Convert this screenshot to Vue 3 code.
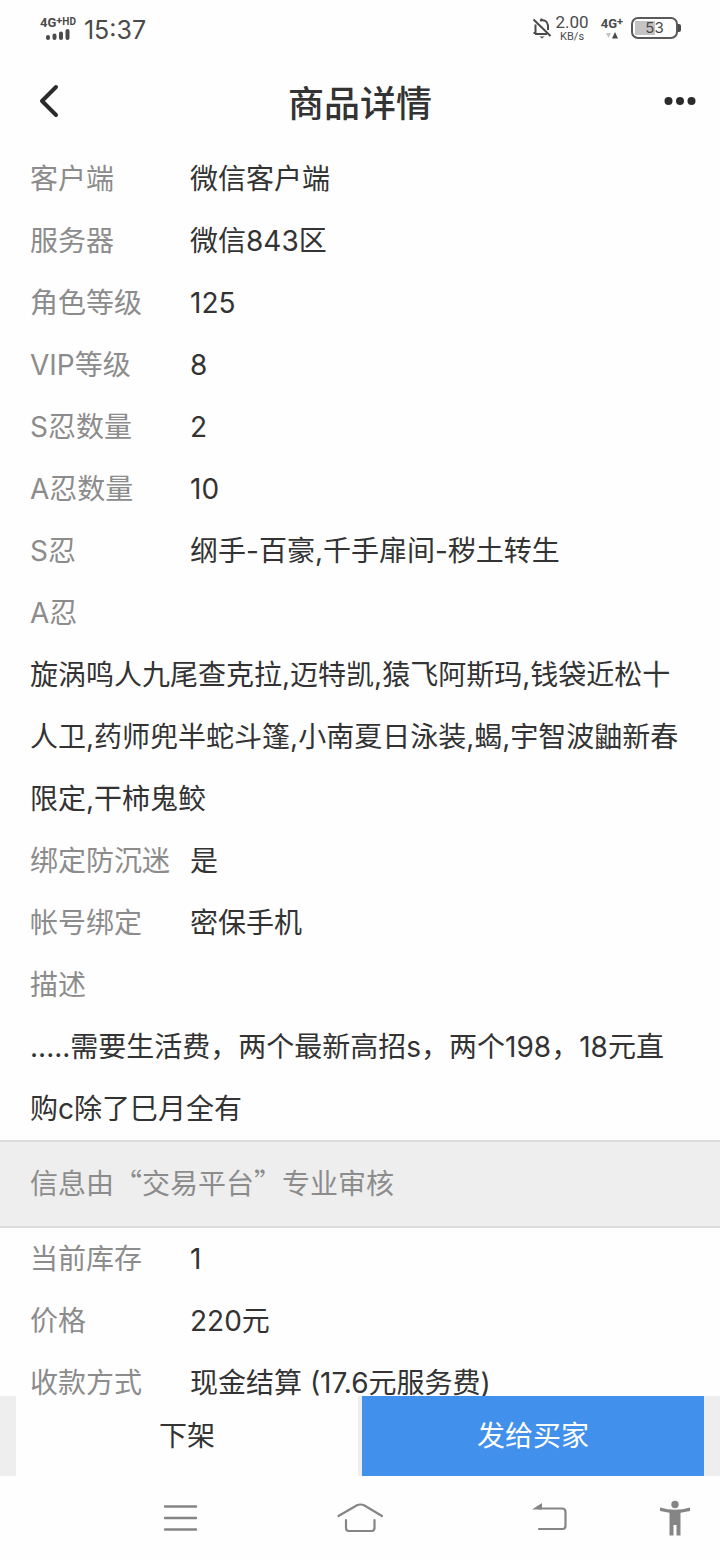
<script setup>
const details = [
  { label: '客户端', value: '微信客户端' },
  { label: '服务器', value: '微信843区' },
  { label: '角色等级', value: '125' },
  { label: 'VIP等级', value: '8' },
  { label: 'S忍数量', value: '2' },
  { label: 'A忍数量', value: '10' },
  { label: 'S忍', value: '纲手-百豪,千手扉间-秽土转生' },
  {
    label: 'A忍',
    value: '旋涡鸣人九尾查克拉,迈特凯,猿飞阿斯玛,钱袋近松十人卫,药师兜半蛇斗篷,小南夏日泳装,蝎,宇智波鼬新春限定,干柿鬼鲛',
    block: true
  },
  { label: '绑定防沉迷', value: '是' },
  { label: '帐号绑定', value: '密保手机' },
  {
    label: '描述',
    value: '.....需要生活费，两个最新高招s，两个198，18元直购c除了巳月全有',
    block: true
  }
]

const sale = [
  { label: '当前库存', value: '1' },
  { label: '价格', value: '220元' },
  { label: '收款方式', value: '现金结算 (17.6元服务费)' }
]
</script>

<template>
  <div class="page">
    <div class="status">
      <div class="signal">
        <span class="net">4G<span class="net-sup">+</span><span class="net-hd">HD</span></span>
        <svg width="24" height="11" viewBox="0 0 24 11" stroke="#4a4a4a" stroke-width="4" stroke-linecap="round">
          <path d="M2 8v1M8.500 6.500v2.500M15 4.500v4.500M21.500 2v7" />
        </svg>
      </div>
      <span class="time">15:37</span>
      <svg class="bell" width="20" height="22" viewBox="0 0 20 22" fill="none" stroke="#4a4a4a" stroke-width="2">
        <path d="M1.500 2.500L18.500 19M3.500 7.500v8.500H1.500M3 17h12M8 3.500q7-1.500 8 5v4.500" />
        <path d="M7.500 19.500h5l-2.500 2z" fill="#4a4a4a" stroke="none" />
        <path d="M9.500 1.500v2" />
      </svg>
      <div class="speed">
        <span class="speed-value">2.00</span>
        <span class="speed-unit">KB/s</span>
      </div>
      <div class="data">
        <span class="net">4G<span class="net-sup">+</span></span>
        <svg width="12" height="7" viewBox="0 0 12 7">
          <path d="M0 1h5l-2.500 5z" fill="#c4c4c4" />
          <path d="M6 6.500h6L9 0z" fill="#4a4a4a" />
        </svg>
      </div>
      <div class="battery">
        <span class="battery-text">53</span>
      </div>
    </div>

    <header class="header">
      <button type="button" class="icon-button" aria-label="返回">
        <svg width="20" height="34" viewBox="0 0 20 34" fill="none" stroke="#2b2b2b" stroke-width="4" stroke-linecap="round" stroke-linejoin="round">
          <path d="M17 3L3 17l14 14" />
        </svg>
      </button>
      <h1 class="title">商品详情</h1>
      <button type="button" class="icon-button" aria-label="更多">
        <svg width="32" height="8" viewBox="0 0 32 8" fill="#2b2b2b">
          <circle cx="4.500" cy="4" r="4" />
          <circle cx="16" cy="4" r="4" />
          <circle cx="27.500" cy="4" r="4" />
        </svg>
      </button>
    </header>

    <main class="content">
      <dl class="list">
        <div v-for="item in details" :key="item.label" class="row" :class="{ 'row-block': item.block }">
          <dt>{{ item.label }}</dt>
          <dd>{{ item.value }}</dd>
        </div>
      </dl>
      <p class="notice">信息由“交易平台”专业审核</p>
      <dl class="list">
        <div v-for="item in sale" :key="item.label" class="row">
          <dt>{{ item.label }}</dt>
          <dd>{{ item.value }}</dd>
        </div>
      </dl>
    </main>

    <footer class="actions">
      <button type="button" class="action">下架</button>
      <button type="button" class="action action-primary">发给买家</button>
    </footer>

    <nav class="system-nav">
      <button type="button" aria-label="最近任务">
        <svg width="36" height="36" viewBox="0 0 36 36" fill="none" stroke="#858585" stroke-width="2.400" stroke-linecap="round">
          <path d="M3 6.500h31M3 18h31M3 29.500h31" />
        </svg>
      </button>
      <button type="button" aria-label="主屏幕">
        <svg width="48" height="36" viewBox="0 0 48 36" fill="none" stroke="#858585" stroke-width="2.200" stroke-linecap="round">
          <path d="M2.500 16L20.500 5.500q4-2 8 0L46 16" />
          <path d="M10 20v8q0 3 3 3h22.500q3 0 3-3v-8" />
        </svg>
      </button>
      <button type="button" aria-label="后退">
        <svg width="36" height="36" viewBox="0 0 36 36" fill="none" stroke="#858585" stroke-width="2.200" stroke-linecap="round">
          <path d="M8 8.500h23q3.500 0 3.500 3.500v14q0 3-3 3H8" />
          <path d="M1 9.500L11 3v6.500z" fill="#858585" stroke="none" />
        </svg>
      </button>
      <button type="button" aria-label="无障碍">
        <svg width="32" height="36" viewBox="0 0 32 36" fill="#858585">
          <circle cx="16" cy="4.500" r="3.700" />
          <path d="M1 7.500Q16 12 31 7.500v3.500l-9.500 1.800V35.500h-4V25h-3v10.500h-4V12.800L1 11z" />
        </svg>
      </button>
    </nav>
  </div>
</template>

<style>
body {
  margin: 0;
  background: #fefefe;
}
</style>

<style scoped>
.page {
  display: flex;
  flex-direction: column;
  height: 100vh;
  color: #333;
  font-family: Inter, 'Noto Sans CJK SC', sans-serif;
  font-size: 28px;
}

button {
  padding: 0;
  border: 0;
  background: none;
  color: inherit;
  font: inherit;
  cursor: pointer;
}

svg {
  display: block;
}

.status {
  display: flex;
  flex: none;
  align-items: center;
  height: 56px;
  padding: 0 40px;
  color: #4a4a4a;
}

.signal,
.data,
.speed {
  display: flex;
  flex-direction: column;
  align-items: center;
  font-family: Roboto, sans-serif;
}

.net {
  display: flex;
  font-size: 13px;
  font-weight: 700;
  line-height: 12px;
}

.net-sup {
  font-size: 11px;
  line-height: 8px;
}

.net-hd {
  font-size: 10px;
  line-height: 10px;
}

.time {
  margin: 4px auto 0 8px;
  font-size: 25px;
}

.speed {
  margin: 0 12px 0 4px;
}

.speed-value {
  font-size: 17px;
  line-height: 17px;
}

.speed-unit {
  font-size: 11px;
  line-height: 11px;
}

.data {
  gap: 2px;
}

.battery {
  position: relative;
  box-sizing: border-box;
  width: 47px;
  height: 22px;
  margin: 0 2px 0 8px;
  border: 2px solid #5a5a5a;
  border-radius: 7px;
  background: linear-gradient(90deg, #c4c4c4 52%, transparent 52%) 2px 2px / 39px 14px no-repeat;
  font-size: 15px;
  line-height: 18px;
  text-align: center;
}

.battery::after {
  content: '';
  position: absolute;
  top: 5px;
  right: -5px;
  width: 3px;
  height: 8px;
  border-radius: 0 2px 2px 0;
  background: #4a4a4a;
}

.header {
  display: flex;
  flex: none;
  align-items: center;
  justify-content: space-between;
  height: 90px;
  padding: 0 24px 2px 39px;
}

.icon-button {
  display: flex;
  align-items: center;
  width: 32px;
  height: 48px;
}

.title {
  margin: 0;
  padding-right: 15px;
  font-size: 36px;
  font-weight: 500;
}

.content {
  flex: 1;
  min-height: 0;
  overflow-y: auto;
  scrollbar-width: none;
}

.list {
  margin: 0;
  padding: 0 30px;
  line-height: 62px;
}

.row {
  display: flex;
}

.row-block {
  display: block;
}

dt {
  flex: none;
  width: 160px;
  color: #8c8c8c;
}

dd {
  margin: 0;
}

.notice {
  margin: 0;
  padding: 0 30px 4px;
  border: solid #dcdcdc;
  border-width: 2px 0;
  background: #eee;
  color: #8c8c8c;
  font-family: 'Noto Sans CJK SC', sans-serif;
  line-height: 80px;
}

.actions {
  display: flex;
  flex: none;
  gap: 4px;
  padding: 0 16px;
  background: #eee;
}

.action {
  flex: 1;
  height: 80px;
  padding-bottom: 4px;
  background: #fefefe;
}

.action-primary {
  background: #4190eb;
  color: #fff;
}

.system-nav {
  display: grid;
  flex: none;
  grid-template-columns: 10fr 10fr 11fr 3fr;
  height: 84px;
  padding: 0 2.5% 0 12.5%;
}

.system-nav button {
  display: flex;
  align-items: center;
  justify-content: center;
}
</style>
